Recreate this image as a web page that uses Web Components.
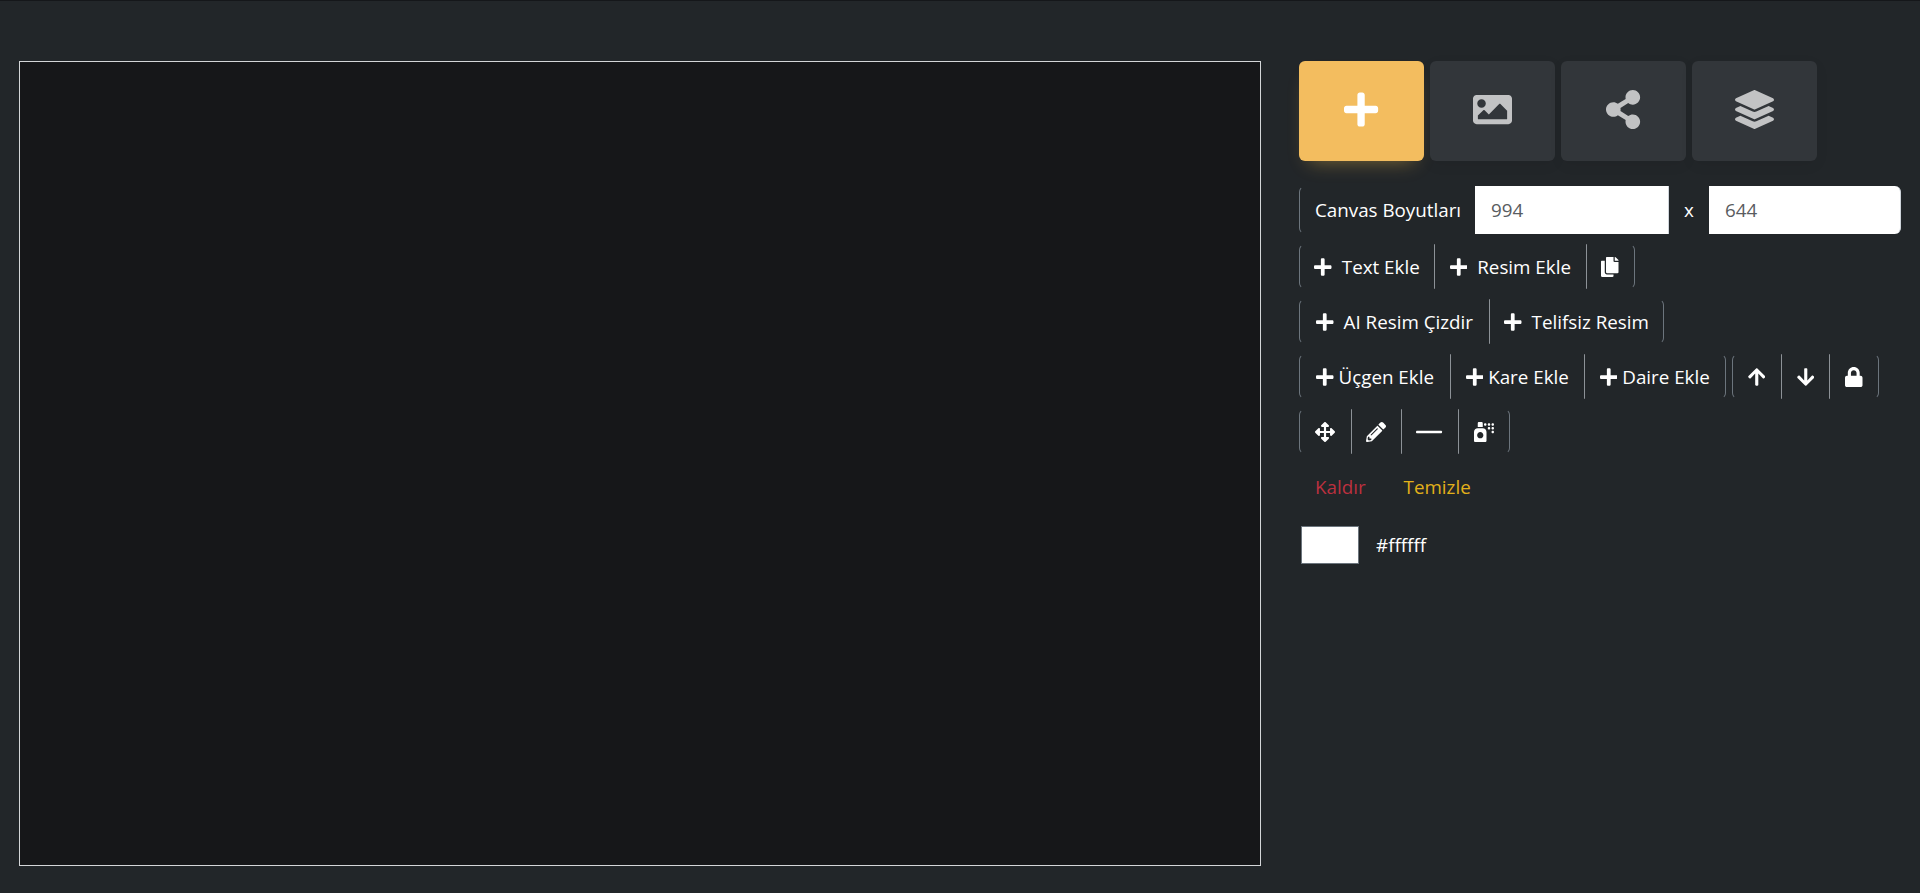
<!DOCTYPE html>
<html lang="tr">
<head>
<meta charset="utf-8">
<title>Canvas</title>
<style>
	html, body { margin: 0; height: 100%; background: #222629; overflow: hidden; }
	body { font: 18.8px/1.5 "Open Sans", "Liberation Sans", sans-serif; color: #fff; }
</style>
</head>
<body>
<editor-page>
	<editor-canvas slot="canvas"></editor-canvas>

	<tab-bar>
		<tab-button icon="plus" active></tab-button>
		<tab-button icon="image"></tab-button>
		<tab-button icon="share"></tab-button>
		<tab-button icon="layers"></tab-button>
	</tab-bar>

	<size-bar width="994" height="644"></size-bar>

	<tool-row>
		<tool-group>
			<tool-button icon="plus" style="--w:136px;--gap:10px">Text Ekle</tool-button>
			<tool-button icon="plus" style="--w:152.7px;--gap:10px">Resim Ekle</tool-button>
			<tool-button icon="copy" style="--w:49px"></tool-button>
		</tool-group>
	</tool-row>
	<tool-row>
		<tool-group>
			<tool-button icon="plus" style="--w:191px;--gap:10px">AI Resim Çizdir</tool-button>
			<tool-button icon="plus" style="--w:175px;--gap:10px">Telifsiz Resim</tool-button>
		</tool-group>
	</tool-row>
	<tool-row>
		<tool-group>
			<tool-button icon="plus" style="--w:152px;--gap:5px">Üçgen Ekle</tool-button>
			<tool-button icon="plus" style="--w:134.5px;--gap:5px">Kare Ekle</tool-button>
			<tool-button icon="plus" style="--w:142.5px;--gap:5px">Daire Ekle</tool-button>
		</tool-group>
		<tool-group>
			<tool-button icon="up" style="--w:50px"></tool-button>
			<tool-button icon="down" style="--w:49.5px"></tool-button>
			<tool-button icon="lock" style="--w:50px"></tool-button>
		</tool-group>
	</tool-row>
	<tool-row>
		<tool-group>
			<tool-button icon="move" style="--w:52.5px"></tool-button>
			<tool-button icon="pencil" style="--w:51px"></tool-button>
			<tool-button icon="dash" style="--w:58px"></tool-button>
			<tool-button icon="spray" style="--w:52px"></tool-button>
		</tool-group>
	</tool-row>

	<link-row>
		<link-button style="--c:#bc303f">Kaldır</link-button>
		<link-button style="--c:#e2b11a">Temizle</link-button>
	</link-row>

	<color-field value="#ffffff"></color-field>
</editor-page>

<script>
const ICONS = {
	plus: [448, "M416 208H272V64c0-17.67-14.33-32-32-32h-32c-17.67 0-32 14.33-32 32v144H32c-17.67 0-32 14.33-32 32v32c0 17.67 14.33 32 32 32h144v144c0 17.67 14.33 32 32 32h32c17.67 0 32-14.33 32-32V304h144c17.67 0 32-14.33 32-32v-32c0-17.67-14.33-32-32-32z"],
	image: [512, "M464 448H48c-26.51 0-48-21.49-48-48V112c0-26.51 21.49-48 48-48h416c26.51 0 48 21.49 48 48v288c0 26.51-21.49 48-48 48zM112 120c-30.928 0-56 25.072-56 56s25.072 56 56 56 56-25.072 56-56-25.072-56-56-56zM64 384h384V272l-87.515-87.515c-4.686-4.686-12.284-4.686-16.971 0L208 320l-55.515-55.515c-4.686-4.686-12.284-4.686-16.971 0L64 336v48z"],
	share: [448, "M352 320c-22.608 0-43.387 7.819-59.79 20.895l-102.486-64.054a96.551 96.551 0 0 0 0-41.683l102.486-64.054C308.613 184.181 329.392 192 352 192c53.019 0 96-42.981 96-96S405.019 0 352 0s-96 42.981-96 96c0 7.158.79 14.13 2.276 20.841L155.79 180.895C139.387 167.819 118.608 160 96 160c-53.019 0-96 42.981-96 96s42.981 96 96 96c22.608 0 43.387-7.819 59.79-20.895l102.486 64.054A96.301 96.301 0 0 0 256 416c0 53.019 42.981 96 96 96s96-42.981 96-96-42.981-96-96-96z"],
	layers: [512, "M12.41 148.02l232.94 105.67c6.8 3.09 14.49 3.09 21.29 0l232.94-105.67c16.55-7.51 16.55-32.52 0-40.03L266.65 2.31a25.607 25.607 0 0 0-21.29 0L12.41 107.98c-16.55 7.51-16.55 32.53 0 40.04zm487.18 88.28l-58.09-26.33-161.64 73.27c-7.56 3.43-15.59 5.17-23.86 5.17s-16.29-1.74-23.86-5.17L70.51 209.97l-58.1 26.33c-16.55 7.5-16.55 32.5 0 40l232.94 105.59c6.8 3.08 14.49 3.08 21.29 0L499.59 276.3c16.55-7.5 16.55-32.5 0-40zm0 127.8l-57.87-26.23-161.86 73.37c-7.56 3.43-15.59 5.17-23.86 5.17s-16.29-1.74-23.86-5.17L70.29 337.87 12.41 364.1c-16.55 7.5-16.55 32.5 0 40l232.94 105.59c6.8 3.08 14.49 3.08 21.29 0L499.59 404.1c16.55-7.5 16.55-32.5 0-40z"],
	copy: [448, "M320 448v40c0 13.255-10.745 24-24 24H24c-13.255 0-24-10.745-24-24V120c0-13.255 10.745-24 24-24h72v296c0 30.879 25.121 56 56 56h168zm0-344V0H152c-13.255 0-24 10.745-24 24v368c0 13.255 10.745 24 24 24h272c13.255 0 24-10.745 24-24V128H344c-13.2 0-24-10.8-24-24zm120.971-31.029L375.029 7.029A24 24 0 0 0 358.059 0H352v96h96v-6.059a24 24 0 0 0-7.029-16.97z"],
	up: [448, "M34.9 289.5l-22.2-22.2c-9.4-9.4-9.4-24.6 0-33.9L207 39c9.4-9.4 24.6-9.4 33.9 0l194.3 194.3c9.4 9.4 9.4 24.6 0 33.9L413 289.4c-9.5 9.5-25 9.3-34.3-.4L264 168.6V456c0 13.3-10.7 24-24 24h-32c-13.3 0-24-10.7-24-24V168.6L69.2 289.1c-9.3 9.8-24.8 10-34.3.4z"],
	down: [448, "M413.1 222.5l22.2 22.2c9.4 9.4 9.4 24.6 0 33.9L241 473c-9.4 9.4-24.6 9.4-33.9 0L12.7 278.6c-9.4-9.4-9.4-24.6 0-33.9l22.2-22.2c9.5-9.5 25-9.3 34.3.4L184 343.4V56c0-13.3 10.7-24 24-24h32c13.3 0 24 10.7 24 24v287.4l114.8-120.5c9.3-9.8 24.8-10 34.3-.4z"],
	lock: [448, "M400 224h-24v-72C376 68.2 307.8 0 224 0S72 68.2 72 152v72H48c-26.5 0-48 21.5-48 48v192c0 26.5 21.5 48 48 48h352c26.5 0 48-21.5 48-48V272c0-26.5-21.5-48-48-48zm-104 0H152v-72c0-39.7 32.3-72 72-72s72 32.3 72 72v72z"],
	move: [512, "M352.201 425.775l-79.196 79.196c-9.373 9.373-24.568 9.373-33.941 0l-79.196-79.196c-15.119-15.119-4.411-40.971 16.971-40.97h51.162L228 284H127.196v51.162c0 21.382-25.851 32.09-40.971 16.971L7.029 272.937c-9.373-9.373-9.373-24.569 0-33.941L86.225 159.8c15.119-15.119 40.971-4.411 40.971 16.971V228H228V127.196h-51.23c-21.382 0-32.09-25.851-16.971-40.971l79.196-79.196c9.373-9.373 24.568-9.373 33.941 0l79.196 79.196c15.119 15.119 4.411 40.971-16.971 40.971h-51.162V228h100.804v-51.162c0-21.382 25.851-32.09 40.97-16.971l79.196 79.196c9.373 9.373 9.373 24.569 0 33.941L425.773 352.2c-15.119 15.119-40.971 4.411-40.97-16.971V284H284v100.804h51.23c21.382 0 32.09 25.851 16.971 40.971z"],
	pencil: [512, "M497.9 142.1l-46.1 46.1c-4.7 4.7-12.3 4.7-17 0l-111-111c-4.7-4.7-4.7-12.3 0-17l46.1-46.1c18.7-18.7 49.1-18.7 67.9 0l60.1 60.1c18.8 18.7 18.8 49.1 0 67.9zM284.2 99.8L21.6 362.4.4 483.9c-2.9 16.4 11.4 30.6 27.8 27.8l121.5-21.3 262.6-262.6c4.7-4.7 4.7-12.3 0-17l-111-111c-4.8-4.7-12.4-4.7-17.1 0zM124.1 339.9c-5.5-5.5-5.5-14.3 0-19.8l154-154c5.5-5.5 14.3-5.5 19.8 0s5.5 14.3 0 19.8l-154 154c-5.5 5.5-14.3 5.5-19.8 0zM88 424h48v36.3l-64.5 11.3-31.1-31.1L51.7 376H88v48z"],
	dash: [666, "M20 226h626c11 0 20 9 20 20v20c0 11-9 20-20 20H20c-11 0-20-9-20-20v-20c0-11 9-20 20-20z"],
	spray: [512, "M224 32c0-17.67-14.33-32-32-32h-64c-17.67 0-32 14.33-32 32v96h128V32zm256 96c-17.67 0-32 14.33-32 32s14.33 32 32 32 32-14.33 32-32-14.33-32-32-32zm-256 32H96c-53.02 0-96 42.98-96 96v224c0 17.67 14.33 32 32 32h256c17.67 0 32-14.33 32-32V256c0-53.02-42.98-96-96-96zm-64 256c-44.18 0-80-35.82-80-80s35.82-80 80-80 80 35.82 80 80-35.82 80-80 80zM480 96c17.67 0 32-14.33 32-32s-14.33-32-32-32-32 14.33-32 32 14.33 32 32 32zm-96 32c-17.67 0-32 14.33-32 32s14.33 32 32 32 32-14.33 32-32-14.33-32-32-32zm-96-96c-17.67 0-32 14.33-32 32s14.33 32 32 32 32-14.33 32-32-14.33-32-32-32zm96 0c-17.67 0-32 14.33-32 32s14.33 32 32 32 32-14.33 32-32-14.33-32-32-32zm96 192c-17.67 0-32 14.33-32 32s14.33 32 32 32 32-14.33 32-32-14.33-32-32-32z"]
};

function iconSvg(name){
	const [w, d] = ICONS[name];
	return `<svg viewBox="0 0 ${w} 512" width="${w / 512}em" height="1em" fill="currentColor" aria-hidden="true"><path d="${d}"/></svg>`;
}

// small base class, every element just fills its shadow root once
class ShadowElement extends HTMLElement {
	constructor(){
		super();
		this.attachShadow({ mode: "open" });
	}
	connectedCallback(){
		this.shadowRoot.innerHTML = this.render();
	}
}

customElements.define("editor-page", class extends ShadowElement {
	render(){
		return `
			<style>
				:host { display: flex; box-sizing: border-box; height: 100vh; padding: 60px 0 0 19px; border-top: 1px solid #15171a; }
				#panel { display: flex; flex-direction: column; width: 602px; margin-left: 38px; }
			</style>
			<slot name="canvas"></slot>
			<div id="panel"><slot></slot></div>
		`;
	}
});

customElements.define("editor-canvas", class extends ShadowElement {
	render(){
		return `
			<style>
				:host { display: block; box-sizing: border-box; width: 1242px; height: 805px; background: #161719; border: 1px solid #d4d6d8; }
			</style>
		`;
	}
});

customElements.define("tab-bar", class extends ShadowElement {
	render(){
		return `
			<style>
				:host { display: flex; gap: 6px; margin-bottom: 25px; }
			</style>
			<slot></slot>
		`;
	}
});

customElements.define("tab-button", class extends ShadowElement {
	render(){
		return `
			<style>
				:host { display: flex; align-items: center; justify-content: center; box-sizing: border-box; width: 125px; height: 100px; padding-bottom: 3px; border-radius: 6px; background: #32363a; color: #c2c3c4; font-size: 39px; box-shadow: 0 4px 14px rgba(0, 0, 0, .06); }
				:host([active]) { background: #f3bd5f; color: #fff; box-shadow: 0 10px 18px -10px rgba(243, 189, 70, .45); }
				svg { display: block; }
			</style>
			${iconSvg(this.getAttribute("icon"))}
		`;
	}
});

customElements.define("size-bar", class extends ShadowElement {
	render(){
		return `
			<style>
				:host { display: flex; align-items: stretch; height: 47.5px; margin-bottom: 10.5px; }
				label { display: flex; flex: none; align-items: center; box-sizing: border-box; width: 176px; padding-left: 15px; border: 1px solid transparent; border-left-color: #6c757d; border-radius: 6px 0 0 6px; white-space: nowrap; }
				input { flex: none; box-sizing: border-box; width: 194px; height: 100%; margin: 0; padding: 0 16px; border: 0; border-right: 1px solid #ced4da; background: #fff; color: #595c5f; font: inherit; outline: 0; }
				#h { width: 192px; border-radius: 0 6px 6px 0; }
				span { display: flex; flex: none; align-items: center; justify-content: center; width: 40px; }
			</style>
			<label for="w">Canvas Boyutları</label>
			<input id="w" type="text" value="${this.getAttribute("width")}">
			<span>x</span>
			<input id="h" type="text" value="${this.getAttribute("height")}">
		`;
	}
});

customElements.define("tool-row", class extends ShadowElement {
	render(){
		return `
			<style>
				:host { display: flex; gap: 5.5px; margin-bottom: 10px; }
			</style>
			<slot></slot>
		`;
	}
});

customElements.define("tool-group", class extends ShadowElement {
	render(){
		return `
			<style>
				:host { display: inline-flex; }
				::slotted(tool-button:first-child) { border-top-left-radius: 6px; border-bottom-left-radius: 6px; border-left-color: #6c757d; }
				::slotted(tool-button:last-child) { border-top-right-radius: 6px; border-bottom-right-radius: 6px; border-right-color: #6c757d; }
				::slotted(tool-button:not(:first-child)) { margin-left: -1px; }
			</style>
			<slot></slot>
		`;
	}
});

customElements.define("tool-button", class extends ShadowElement {
	render(){
		const icon = this.getAttribute("icon");
		return `
			<style>
				:host { display: flex; align-items: center; justify-content: center; gap: var(--gap, 0); box-sizing: border-box; width: var(--w, auto); height: 45px; border: 1px solid transparent; border-left-color: #8d9297; border-right-color: #8d9297; white-space: nowrap; }
				svg { display: block; font-size: 20px; }
				slot { display: block; padding-top: 1px; }
			</style>
			${iconSvg(icon)}<slot></slot>
		`;
	}
});

customElements.define("link-row", class extends ShadowElement {
	render(){
		return `
			<style>
				:host { display: flex; gap: 6px; margin: 1px 0 16px; }
			</style>
			<slot></slot>
		`;
	}
});

customElements.define("link-button", class extends ShadowElement {
	render(){
		return `
			<style>
				:host { display: flex; align-items: center; height: 45px; padding: 0 16px; color: var(--c); white-space: nowrap; }
			</style>
			<slot></slot>
		`;
	}
});

customElements.define("color-field", class extends ShadowElement {
	render(){
		return `
			<style>
				:host { display: flex; align-items: center; gap: 17px; padding-left: 2px; }
				i { display: block; box-sizing: border-box; width: 58px; height: 38px; background: #fff; border: 1px solid #6c757d; }
			</style>
			<i></i><span>${this.getAttribute("value")}</span>
		`;
	}
});
</script>
</body>
</html>
